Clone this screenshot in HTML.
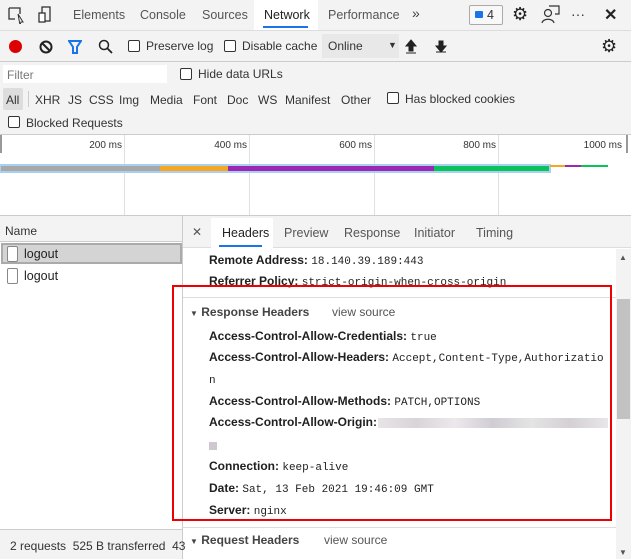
<!DOCTYPE html>
<html><head><meta charset="utf-8"><style>
*{margin:0;padding:0;box-sizing:border-box}
body{width:631px;height:559px;overflow:hidden;background:#fff;font-family:"Liberation Sans",sans-serif;font-size:12px;color:#333;position:relative}
.a{position:absolute;white-space:nowrap}
.cb{position:absolute;width:12px;height:12px;border:1px solid #333;border-radius:2px;background:#fff}
.m{font-family:"Liberation Mono",monospace;font-size:11px;color:#222}
b{font-weight:bold;color:#202020}
.hl{position:absolute;left:0;width:631px;height:1px;background:#ccc}
.t{position:absolute;top:8px;color:#555;font-size:12.5px}
.g{position:absolute;top:135px;width:1px;height:80px;background:#e0e0e0}
.lb{position:absolute;top:140px;font-size:10px;text-align:right;width:60px}
</style></head><body>
<div class="a" style="left:0;top:0;width:631px;height:30px;background:#f3f3f3"></div>
<div class="a" style="left:254px;top:0;width:64px;height:30px;background:#fff"></div>
<div class="a" style="left:263px;top:26px;width:45px;height:2px;background:#1a73e8"></div>
<div class="hl" style="top:30px;background:#ddd"></div>
<svg class="a" style="left:7px;top:6px" width="50" height="18"><path d="M2 2h11v6M2 2v11h6" fill="none" stroke="#333" stroke-width="1.3"/><path d="M11 8l5 8-2 0-1 3z" fill="none" stroke="#333"/><rect x="35" y="1" width="8" height="14" fill="none" stroke="#333" stroke-width="1.3"/><rect x="32" y="7" width="6" height="9" fill="#fff" stroke="#333" stroke-width="1.3"/></svg>
<div class="t" style="left:73px">Elements</div>
<div class="t" style="left:140px">Console</div>
<div class="t" style="left:202px">Sources</div>
<div class="t" style="left:264px;color:#222">Network</div>
<div class="t" style="left:328px">Performance</div>
<div class="a" style="left:412px;top:5px;color:#444;font-size:14px">»</div>
<div class="a" style="left:469px;top:5px;width:34px;height:20px;border:1px solid #aaa;border-radius:2px;background:#f8f8f8"></div>
<div class="a" style="left:475px;top:11px;width:8px;height:7px;background:#1a73e8;border-radius:1px"></div>
<div class="a" style="left:487px;top:8px;color:#333;font-size:12.5px">4</div>
<div class="a" style="left:512px;top:4px;font-size:18px;color:#222">⚙</div>
<svg class="a" style="left:541px;top:5px" width="20" height="20"><circle cx="7" cy="8" r="3.5" fill="none" stroke="#333" stroke-width="1.2"/><path d="M1 18c1-5 11-5 12 0M8 1h10v8h-4" fill="none" stroke="#333" stroke-width="1.2"/></svg>
<div class="a" style="left:571px;top:6px;font-size:14px;color:#333">···</div>
<div class="a" style="left:604px;top:5px;font-size:16px;color:#222;font-weight:bold">✕</div>
<div class="a" style="left:0;top:31px;width:631px;height:30px;background:#f3f3f3"></div>
<div class="a" style="left:9px;top:40px;width:13px;height:13px;border-radius:50%;background:#d00"></div>
<svg class="a" style="left:39px;top:40px" width="14" height="14"><circle cx="7" cy="7" r="5.5" fill="none" stroke="#222" stroke-width="2"/><path d="M3 3l8 8" stroke="#222" stroke-width="2"/></svg>
<svg class="a" style="left:68px;top:40px" width="14" height="14"><path d="M1 1h12l-4 6v6h-4v-6z" fill="none" stroke="#1a73e8" stroke-width="2"/></svg>
<svg class="a" style="left:98px;top:39px" width="16" height="16"><circle cx="6" cy="6" r="4.5" fill="none" stroke="#222" stroke-width="1.5"/><path d="M9 9l5 5" stroke="#222" stroke-width="1.8"/></svg>
<div class="cb" style="left:128px;top:40px"></div><div class="a" style="left:146px;top:39px">Preserve log</div>
<div class="cb" style="left:224px;top:40px"></div><div class="a" style="left:242px;top:39px">Disable cache</div>
<div class="a" style="left:322px;top:34px;width:77px;height:24px;background:#e8e8e8"></div>
<div class="a" style="left:328px;top:39px">Online</div>
<div class="a" style="left:388px;top:40px;font-size:9px">▼</div>
<svg class="a" style="left:404px;top:39px" width="50" height="15"><path d="M7 1l5 6h-3v5h-4v-5h-3z M2 14h10" fill="#222" stroke="#222"/><path d="M37 14l5-6h-3v-5h-4v5h-3z M32 14h10" fill="#222" stroke="#222" transform="translate(0,-1)"/></svg>
<div class="a" style="left:601px;top:36px;font-size:18px;color:#222">⚙</div>
<div class="hl" style="top:61px"></div>
<div class="a" style="left:0;top:62px;width:631px;height:72px;background:#f3f3f3"></div>
<div class="a" style="left:3px;top:65px;width:164px;height:18px;background:#fff"></div>
<div class="a" style="left:7px;top:68px;color:#777">Filter</div>
<div class="cb" style="left:180px;top:68px"></div><div class="a" style="left:198px;top:67px">Hide data URLs</div>
<div class="a" style="left:3px;top:88px;width:20px;height:22px;background:#ddd;border-radius:2px"></div>
<div class="a" style="left:6px;top:93px">All</div>
<div class="a" style="left:28px;top:91px;width:1px;height:16px;background:#ccc"></div>
<div class="a" style="left:35px;top:93px">XHR</div><div class="a" style="left:68px;top:93px">JS</div><div class="a" style="left:89px;top:93px">CSS</div><div class="a" style="left:119px;top:93px">Img</div><div class="a" style="left:150px;top:93px">Media</div><div class="a" style="left:193px;top:93px">Font</div><div class="a" style="left:227px;top:93px">Doc</div><div class="a" style="left:258px;top:93px">WS</div><div class="a" style="left:285px;top:93px">Manifest</div><div class="a" style="left:341px;top:93px">Other</div>
<div class="cb" style="left:387px;top:92px"></div><div class="a" style="left:405px;top:92px">Has blocked cookies</div>
<div class="cb" style="left:8px;top:116px"></div><div class="a" style="left:26px;top:116px">Blocked Requests</div>
<div class="hl" style="top:134px"></div>
<div class="a" style="left:0;top:135px;width:2px;height:18px;background:#999"></div>
<div class="a" style="left:626px;top:135px;width:2px;height:18px;background:#999"></div>
<div class="g" style="left:124px"></div><div class="g" style="left:249px"></div><div class="g" style="left:374px"></div><div class="g" style="left:498px"></div>
<div class="lb" style="left:62px">200 ms</div>
<div class="lb" style="left:187px">400 ms</div>
<div class="lb" style="left:312px">600 ms</div>
<div class="lb" style="left:436px">800 ms</div>
<div class="lb" style="left:562px">1000 ms</div>
<div class="a" style="left:0;top:164px;width:551px;height:9px;background:#a8d0f0"></div>
<div class="a" style="left:1px;top:166px;width:159px;height:5px;background:#a8a8a8"></div>
<div class="a" style="left:160px;top:166px;width:68px;height:5px;background:#f5a623"></div>
<div class="a" style="left:228px;top:166px;width:206px;height:5px;background:#9c27b0"></div>
<div class="a" style="left:434px;top:166px;width:115px;height:5px;background:#0bc35a"></div>
<div class="a" style="left:550px;top:165px;width:15px;height:2px;background:#f5a623"></div>
<div class="a" style="left:565px;top:165px;width:16px;height:2px;background:#9c27b0"></div>
<div class="a" style="left:581px;top:165px;width:27px;height:2px;background:#0bc35a"></div>
<div class="hl" style="top:215px"></div>
<div class="a" style="left:0;top:216px;width:182px;height:26px;background:#f3f3f3;border-bottom:1px solid #ccc"></div>
<div class="a" style="left:5px;top:224px">Name</div>
<div class="a" style="left:182px;top:216px;width:1px;height:343px;background:#ccc"></div>
<div class="a" style="left:1px;top:243px;width:181px;height:21px;background:#d4d4d4;border:2px solid #aaa"></div>
<div class="cb" style="left:7px;top:246px;height:16px;width:11px;border-color:#888"></div>
<div class="a" style="left:24px;top:247px;font-size:12.5px;color:#222">logout</div>
<div class="cb" style="left:7px;top:268px;height:16px;width:11px;border-color:#888"></div>
<div class="a" style="left:24px;top:269px;font-size:12.5px;color:#222">logout</div>
<div class="a" style="left:0;top:529px;width:182px;height:30px;background:#f3f3f3;border-top:1px solid #ccc"></div>
<div class="a" style="left:10px;top:539px;color:#333">2 requests &nbsp;525 B transferred &nbsp;43</div>
<div class="a" style="left:183px;top:216px;width:448px;height:32px;background:#f3f3f3;border-bottom:1px solid #ddd"></div>
<div class="a" style="left:211px;top:218px;width:62px;height:30px;background:#fff"></div>
<div class="a" style="left:219px;top:245px;width:43px;height:2px;background:#1a73e8"></div>
<div class="a" style="left:192px;top:225px;color:#555">✕</div>
<div class="a" style="left:222px;top:226px;color:#222;font-size:12.5px">Headers</div>
<div class="a" style="left:284px;top:226px;color:#555;font-size:12.5px">Preview</div>
<div class="a" style="left:344px;top:226px;color:#555;font-size:12.5px">Response</div>
<div class="a" style="left:414px;top:226px;color:#555;font-size:12.5px">Initiator</div>
<div class="a" style="left:476px;top:226px;color:#555;font-size:12.5px">Timing</div>
<div class="a" style="left:616px;top:249px;width:15px;height:310px;background:#f3f3f3"></div>
<div class="a" style="left:617px;top:299px;width:13px;height:120px;background:#c2c2c2"></div>
<div class="a" style="left:619px;top:253px;font-size:8px;color:#555">▲</div>
<div class="a" style="left:619px;top:548px;font-size:8px;color:#555">▼</div>
<div class="a" style="left:209px;top:253px"><b>Remote Address:</b> <span class="m">18.140.39.189:443</span></div>
<div class="a" style="left:209px;top:274px"><b>Referrer Policy:</b> <span class="m">strict-origin-when-cross-origin</span></div>
<div class="a" style="left:183px;top:297px;width:433px;height:1px;background:#ddd"></div>
<div class="a" style="left:190px;top:305px;color:#444"><span style="font-size:8px">▼</span> <b style="color:#444">Response Headers</b></div>
<div class="a" style="left:332px;top:305px;color:#555">view source</div>
<div class="a" style="left:209px;top:329px"><b>Access-Control-Allow-Credentials:</b> <span class="m">true</span></div>
<div class="a" style="left:209px;top:350px"><b>Access-Control-Allow-Headers:</b> <span class="m">Accept,Content-Type,Authorizatio</span></div>
<div class="a" style="left:209px;top:372px"><span class="m">n</span></div>
<div class="a" style="left:209px;top:394px"><b>Access-Control-Allow-Methods:</b> <span class="m">PATCH,OPTIONS</span></div>
<div class="a" style="left:209px;top:415px"><b>Access-Control-Allow-Origin:</b></div>
<div class="a" style="left:378px;top:418px;width:230px;height:10px;background:linear-gradient(90deg,#e8e4e8,#d8d4d8,#ece8ec,#d0ccd4,#e4e4e4,#d4d0d4,#e8e6e8)"></div>
<div class="a" style="left:209px;top:442px;width:8px;height:8px;background:#d0c8d0"></div>
<div class="a" style="left:209px;top:459px"><b>Connection:</b> <span class="m">keep-alive</span></div>
<div class="a" style="left:209px;top:481px"><b>Date:</b> <span class="m">Sat, 13 Feb 2021 19:46:09 GMT</span></div>
<div class="a" style="left:209px;top:503px"><b>Server:</b> <span class="m">nginx</span></div>
<div class="a" style="left:183px;top:527px;width:433px;height:1px;background:#ddd"></div>
<div class="a" style="left:190px;top:533px;color:#444"><span style="font-size:8px">▼</span> <b style="color:#444">Request Headers</b></div>
<div class="a" style="left:324px;top:533px;color:#555">view source</div>
<div class="a" style="left:172px;top:285px;width:440px;height:236px;border:2px solid #e00"></div>
</body></html>
